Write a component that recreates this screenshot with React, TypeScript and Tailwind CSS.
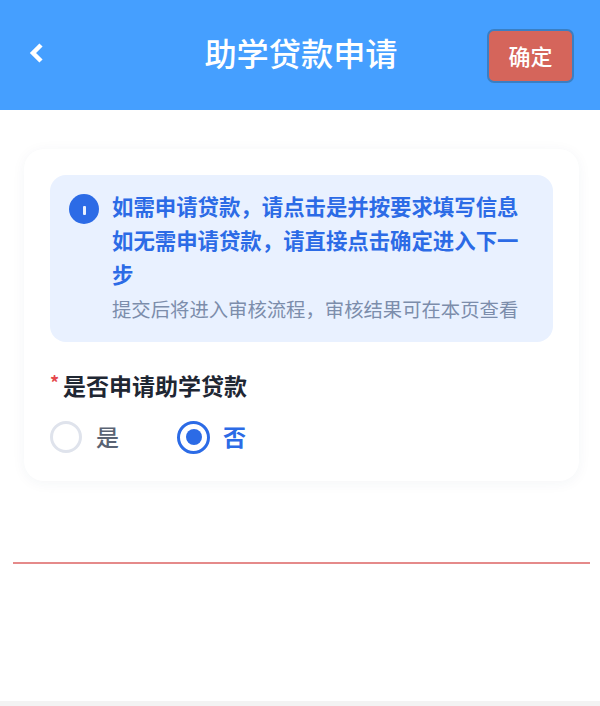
export default function App() {
  return (
    <div className="w-[600px] h-[706px] flex flex-col bg-[#f3f3f3] overflow-hidden font-['Noto_Sans_CJK_SC',sans-serif]">
      <header className="h-[110px] shrink-0 bg-[#459fff] flex items-center justify-between pl-[28px] pr-[26px] relative">
        <svg width="16" height="22" viewBox="0 0 16 22" className="mt-[-4px]">
          <path d="M13 3 L5 11 L13 19" fill="none" stroke="#fff" strokeWidth="4.5" strokeLinejoin="miter" />
        </svg>
        <h1 className="absolute left-0 right-0 top-[28px] text-center text-[32.2px] leading-[48px] font-medium text-white pl-[2px]">助学贷款申请</h1>
        <button className="w-[87px] h-[54px] mt-[1px] pb-[1px] rounded-[7px] bg-[#d5655b] border-2 border-[#3a7fc4] text-white text-[22px] leading-[28px] font-medium">确定</button>
      </header>
      <main className="flex-1 bg-white pt-[39px] px-[13px] flex flex-col">
        <section className="ml-[11px] mr-[8px] h-[332px] rounded-[20px] bg-white shadow-[0_2px_14px_rgba(30,50,90,0.05)] p-[26px] flex flex-col">
          <div className="h-[167px] rounded-[16px] bg-[#e9f1ff] pl-[19px] pr-[30px] pt-[14px] flex gap-[13px]">
            <div className="w-[30px] h-[30px] mt-[5px] shrink-0 rounded-full bg-[#2c6be6] flex items-center justify-center">
              <div className="w-[3px] h-[9px] bg-[#e9f1ff] rounded-[1px] mt-[3px]" />
            </div>
            <div className="flex flex-col w-[420px] shrink-0">
              <p className="text-[21.4px] leading-[34px] font-bold text-[#2c6be6]">如需申请贷款，请点击是并按要求填写信息<br />如无需申请贷款，请直接点击确定进入下一步</p>
              <p className="text-[19.35px] leading-[32px] mt-[2px] whitespace-nowrap text-[#7c8dab]">提交后将进入审核流程，审核结果可在本页查看</p>
            </div>
          </div>
          <div className="mt-[26px] flex items-center h-[34px]">
            <span className="w-[13px] text-[#e5484d] text-[18px] leading-[18px] mt-[-6px] font-bold">*</span>
            <span className="text-[23px] leading-[34px] font-bold text-[#1f2733]">是否申请助学贷款</span>
          </div>
          <div className="mt-[18px] flex items-center h-[34px]">
            <div className="w-[32px] h-[32px] rounded-full border-[3px] border-[#dfe3ec] bg-white" />
            <span className="ml-[14px] mt-[-2px] text-[23px] leading-[34px] text-[#5a6373] font-medium">是</span>
            <div className="ml-[58px] w-[33px] h-[33px] rounded-full border-[3px] border-[#2c6be6] flex items-center justify-center">
              <div className="w-[16px] h-[16px] rounded-full bg-[#2c6be6]" />
            </div>
            <span className="ml-[13px] mt-[-2px] text-[23px] leading-[34px] text-[#2c6be6] font-bold">否</span>
          </div>
        </section>
        <div className="mt-[81px] h-[2px] w-[577px] bg-[#e58a8a]" />
      </main>
      <div className="h-[5px] shrink-0 bg-[#f3f3f3]" />
    </div>
  );
}
